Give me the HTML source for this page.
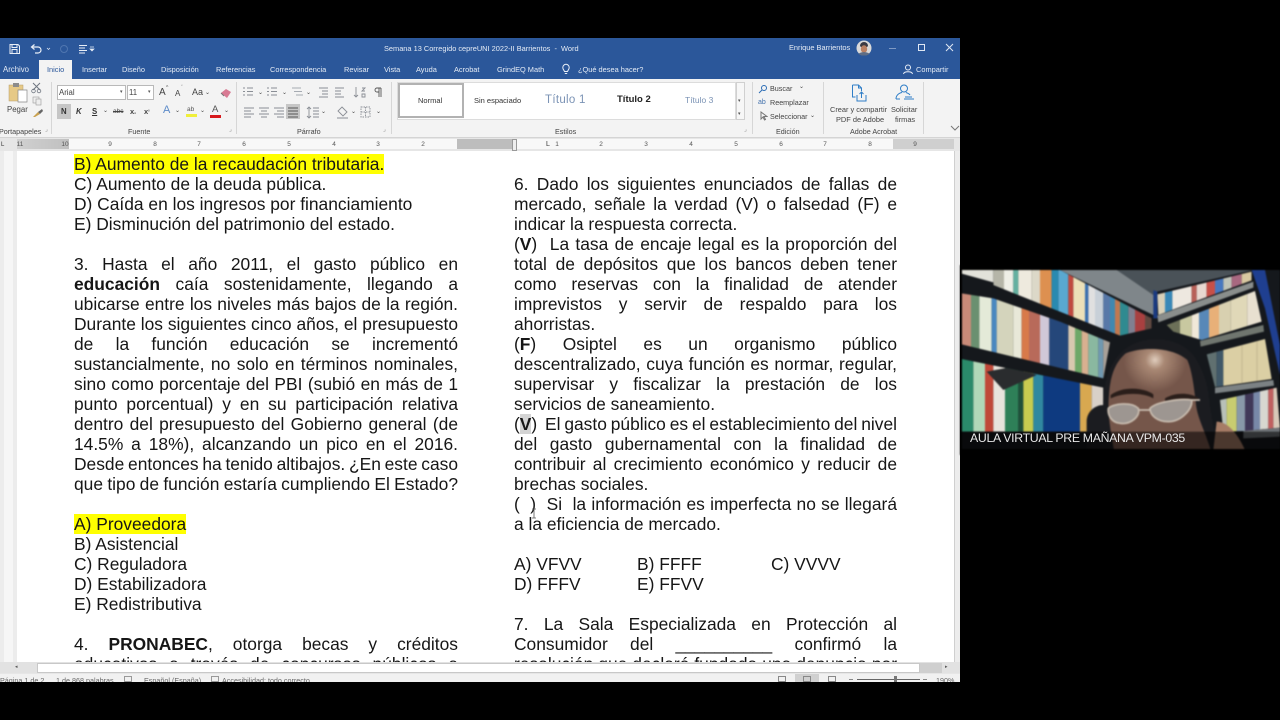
<!DOCTYPE html>
<html lang="es"><head><meta charset="utf-8"><title>Word</title>
<style>
html,body{margin:0;padding:0;background:#000;width:1280px;height:720px;overflow:hidden}
body{position:relative;font-family:"Liberation Sans",sans-serif}
.a{position:absolute;white-space:nowrap}
#word{position:absolute;left:0;top:38px;width:960px;height:644px;background:#e6e6e6;overflow:hidden}
#title{position:absolute;left:0;top:0;width:960px;height:41px;background:#2b579a;filter:blur(.25px)}
#title .a{color:#e4ebf5;font-size:7.400px;line-height:10px}
#ribbon{position:absolute;left:0;top:41px;width:960px;height:58px;background:#f3f3f3;border-bottom:1px solid #d4d4d4;filter:blur(.3px)}
#ribbon .a{font-size:7.200px;line-height:9px;color:#444}
.sep{position:absolute;top:3px;width:1px;height:52px;background:#d6d6d6}
.box{position:absolute;background:#fff;border:1px solid #b9b9b9;box-sizing:border-box}
#ruler{position:absolute;left:0;top:100px;width:960px;height:13px;background:#e6e6e6;filter:blur(.3px)}
#ruler .t{position:absolute;top:2px;font-size:6.500px;line-height:9px;color:#555;width:10px;text-align:center;margin-left:-5px}
#doc{position:absolute;left:17px;top:113px;width:937px;height:511px;background:#fff;overflow:hidden}
#txt{position:absolute;left:0;top:0;width:937px;height:511px;filter:blur(.3px)}
.col{position:absolute;width:384px;font-size:17.400px;line-height:20px;color:#161616}
.l{position:absolute;left:0;width:384px;height:20px;line-height:20px;text-align:justify;text-align-last:justify;overflow:hidden;word-spacing:-3px}
.r .l{width:383px}
.n{text-align:left;text-align-last:left;white-space:pre;word-spacing:0}
.y{background:#ffff00;display:inline-block;line-height:20px;height:20px}
.g{background:#d4d4d4;display:inline-block;line-height:20px;height:20px}
#status .a{font-size:7.200px;line-height:9px;color:#666}
.b rect{height:570px}
</style></head><body>
<div id="word">
 <div id="title">
  <svg class="a" style="left:8px;top:4px" width="90" height="14" viewBox="0 0 90 14" fill="none" stroke="#e8eef7">
   <path d="M2 2.500h8l1.500 1.500v7.500h-9.500z M4 2.500v3h5v-3 M4 11.500v-4h5v4" stroke-width="1"/>
   <path d="M24 5h6a3 3 0 0 1 0 6h-3 M26.500 2.500l-3 2.500 3 2.500" stroke-width="1.200"/>
   <path d="M39 6l1.500 1.500 1.500-1.500" stroke-width=".7"/>
   <circle cx="56" cy="7" r="3.500" stroke="#4f76b0" stroke-width="1"/>
   <path d="M71 3.500h8 M71 6h6 M71 8.500h8 M71 11h6" stroke-width="1"/>
  </svg>
  <svg class="a" style="left:89px;top:8px" width="6" height="6" viewBox="0 0 6 6"><path d="M1 1h4 M1 3h4l-2 2z" stroke="#e8eef7" stroke-width=".7" fill="#e8eef7"/></svg>
  <div class="a" style="left:384px;top:6px">Semana 13 Corregido cepreUNI 2022-II Barrientos &nbsp;-&nbsp; Word</div>
  <div class="a" style="left:789px;top:5px">Enrique Barrientos</div>
  <svg class="a" style="left:856px;top:2px" width="16" height="16" viewBox="0 0 16 16"><circle cx="8" cy="8" r="7.500" fill="#d9d9d9"/><path d="M4 6a4 4 0 0 1 8 0l-1 1H5z" fill="#3a3a44"/><ellipse cx="8" cy="9" rx="3.200" ry="3.800" fill="#b98063"/><path d="M2.500 14c2-2.500 9-2.500 11 0l-3 1.500h-5z" fill="#5e6d85"/></svg>
  <svg class="a" style="left:885px;top:4px" width="72" height="12" viewBox="0 0 72 12" fill="none" stroke="#dfe7f3"><path d="M4 6.500h7" stroke="#7f9ac4"/><rect x="33.500" y="2.500" width="6" height="6"/><path d="M61 2l7 7M68 2l-7 7"/></svg>
  <div class="a" style="left:3px;top:27px;font-size:7.800px">Archivo</div>
  <div class="a" style="left:39px;top:22px;width:33px;height:19px;background:#f3f3f3"></div>
  <div class="a" style="left:47px;top:27px;color:#2b579a">Inicio</div>
  <div class="a" style="left:82px;top:27px">Insertar</div>
  <div class="a" style="left:122px;top:27px">Diseño</div>
  <div class="a" style="left:161px;top:27px">Disposición</div>
  <div class="a" style="left:216px;top:27px">Referencias</div>
  <div class="a" style="left:270px;top:27px">Correspondencia</div>
  <div class="a" style="left:344px;top:27px">Revisar</div>
  <div class="a" style="left:384px;top:27px">Vista</div>
  <div class="a" style="left:416px;top:27px">Ayuda</div>
  <div class="a" style="left:454px;top:27px">Acrobat</div>
  <div class="a" style="left:497px;top:27px">GrindEQ Math</div>
  <svg class="a" style="left:561px;top:25px" width="10" height="12" viewBox="0 0 10 12" fill="none" stroke="#e8eef7"><path d="M3.500 8.500C3 7 1.800 6.500 1.800 4.500a3.200 3.200 0 0 1 6.400 0C8.200 6.500 7 7 6.500 8.500z M3.800 10.500h2.400"/></svg>
  <div class="a" style="left:578px;top:27px">¿Qué desea hacer?</div>
  <svg class="a" style="left:903px;top:26px" width="10" height="11" viewBox="0 0 10 11" fill="none" stroke="#e8eef7"><circle cx="5" cy="3.500" r="2.500"/><path d="M.5 10c.5-3 8.500-3 9 0"/></svg>
  <div class="a" style="left:916px;top:27px">Compartir</div>
 </div>
 <div id="ribbon">
  <svg class="a" style="left:8px;top:3px" width="38" height="36" viewBox="0 0 38 36">
   <rect x="1" y="3" width="14" height="16" fill="#e6c987" stroke="#b69c68" stroke-width=".5"/>
   <rect x="5" y="1" width="6" height="4" fill="#8c8c8c"/>
   <path d="M10 8h9v12h-9z" fill="#fff" stroke="#888" stroke-width=".7"/>
   <path d="M25 8l7-7 M32 8l-7-7" stroke="#6f7680" stroke-width="1" fill="none"/>
   <circle cx="25.500" cy="9" r="1.800" fill="none" stroke="#6f7680" stroke-width=".8"/><circle cx="31" cy="9" r="1.800" fill="none" stroke="#6f7680" stroke-width=".8"/>
   <rect x="25" y="15" width="6" height="6" fill="#eee" stroke="#999" stroke-width=".6"/><rect x="28" y="17" width="5" height="6" fill="#eee" stroke="#999" stroke-width=".6"/>
   <path d="M25 35l5-5 2 2-5 3z" fill="#c9a14f"/><path d="M30 30l4-3 1 2-3 3z" fill="#666"/>
  </svg>
  <div class="a" style="left:7px;top:26px;font-size:7.800px">Pegar</div>
  <div class="a" style="left:-1px;top:48px">Portapapeles</div>
  <div class="a" style="left:45px;top:47px;font-size:6px;color:#888">⌟</div>
  <div class="sep" style="left:51px"></div>
  <div class="box" style="left:57px;top:6px;width:69px;height:15px"></div>
  <div class="a" style="left:59px;top:9px;font-size:7.800px">Arial</div>
  <div class="a" style="left:120px;top:9px;font-size:5px;color:#555">▾</div>
  <div class="box" style="left:127px;top:6px;width:27px;height:15px"></div>
  <div class="a" style="left:129px;top:9px;font-size:7.800px">11</div>
  <div class="a" style="left:148px;top:9px;font-size:5px;color:#555">▾</div>
  <div class="a" style="left:159px;top:8px;font-size:10px;line-height:11px">A</div><div class="a" style="left:166px;top:5px;font-size:5px;color:#555">^</div>
  <div class="a" style="left:175px;top:10px;font-size:8px">A</div><div class="a" style="left:181px;top:5px;font-size:5px;color:#555">ˇ</div>
  <div class="a" style="left:192px;top:9px;font-size:9px">Aa</div><div class="a" style="left:205px;top:10px;font-size:6px">⌄</div>
  <svg class="a" style="left:220px;top:8px" width="12" height="12" viewBox="0 0 12 12"><path d="M1 6l5-4 5 3-4 6z" fill="#d87a93"/><path d="M1 6l3 3" stroke="#777"/></svg>
  <div class="a" style="left:57px;top:25px;width:14px;height:15px;background:#c6c6c6"></div>
  <div class="a" style="left:61px;top:28px;font-size:7.800px;font-weight:bold;color:#333">N</div>
  <div class="a" style="left:76px;top:28px;font-size:7.800px;font-style:italic;font-weight:bold;color:#333">K</div>
  <div class="a" style="left:92px;top:28px;font-size:7.800px;font-weight:bold;text-decoration:underline;color:#333">S</div>
  <div class="a" style="left:103px;top:28px;font-size:6px">⌄</div>
  <div class="a" style="left:113px;top:28px;font-size:6.500px;text-decoration:line-through">abc</div>
  <div class="a" style="left:130px;top:28px;font-size:7.500px;font-weight:bold">x<span style="font-size:4.500px">₂</span></div>
  <div class="a" style="left:144px;top:28px;font-size:7.500px;font-weight:bold">x<span style="font-size:4.500px;vertical-align:top">²</span></div>
  <div class="a" style="left:163px;top:25px;font-size:11px;line-height:13px;color:#5c8bc9">A</div><div class="a" style="left:175px;top:28px;font-size:6px">⌄</div>
  <div class="a" style="left:187px;top:26px;font-size:6.500px;color:#555">ab</div><div class="a" style="left:186px;top:35px;width:11px;height:3px;background:#f0ef3a"></div><div class="a" style="left:200px;top:28px;font-size:6px">⌄</div>
  <div class="a" style="left:212px;top:26px;font-size:9.500px;color:#555">A</div><div class="a" style="left:210px;top:36px;width:11px;height:3px;background:#d7191c"></div><div class="a" style="left:224px;top:28px;font-size:6px">⌄</div>
  <div class="a" style="left:128px;top:48px">Fuente</div>
  <div class="a" style="left:229px;top:47px;font-size:6px;color:#888">⌟</div>
  <div class="sep" style="left:236px"></div>
  <svg class="a" style="left:243px;top:7px" width="145" height="34" viewBox="0 0 145 34" fill="none" stroke="#8a8e95" stroke-width=".9">
   <path d="M0 2h2M4 2h6M0 5.500h2M4 5.500h6M0 9h2M4 9h6"/><path d="M24 2h2M28 2h6M24 5.500h2M28 5.500h6M24 9h2M28 9h6"/><path d="M49 2h9M51 5.500h8M53 9h7" stroke="#a6abb2"/>
   <path d="M76 2h9M79 5h6M79 8h6M76 11h9"/><path d="M92 2h9M92 5h6M92 8h6M92 11h9"/>
   <path d="M113 1v10M111 9l2 2 2-2M119 2h3l-3 3h3M119 8h3v3h-3z"/>
   <path d="M134 2h4M136 2v9M138 2v9M134 2a2 2 0 0 0 0 4h2" stroke="#555"/>
   <path d="M1 22h10M1 25h7M1 28h10M1 31h7"/><path d="M16 22h10M18 25h6M16 28h10M18 31h6"/><path d="M31 22h10M34 25h7M31 28h10M34 31h7"/>
   <rect x="43" y="18" width="14" height="15" fill="#c6c6c6" stroke="none"/><path d="M45 22h10M45 25h10M45 28h10M45 31h10" stroke="#555"/>
   <path d="M66 21v11M64 23l2-2 2 2M64 30l2 2 2-2M70 22h6M70 25h6M70 28h6M70 31h6"/>
   <path d="M99 21l5 5-4 4-5-5z M94 32h11"/><path d="M118 21h9v10h-9zM122.500 21v10M118 26h9" stroke-dasharray="1.500 1"/>
  </svg>
  <div class="a" style="left:258px;top:10px;font-size:6px">⌄</div><div class="a" style="left:282px;top:10px;font-size:6px">⌄</div><div class="a" style="left:306px;top:10px;font-size:6px">⌄</div>
  <div class="a" style="left:321px;top:29px;font-size:6px">⌄</div><div class="a" style="left:351px;top:29px;font-size:6px">⌄</div><div class="a" style="left:376px;top:29px;font-size:6px">⌄</div>
  <div class="a" style="left:297px;top:48px">Párrafo</div>
  <div class="a" style="left:383px;top:47px;font-size:6px;color:#888">⌟</div>
  <div class="sep" style="left:391px"></div>
  <div class="box" style="left:397px;top:3px;width:339px;height:38px;background:#fff;border-color:#dcdcdc"></div>
  <div class="a" style="left:398px;top:4px;width:66px;height:35px;border:2px solid #b2b2b2;box-sizing:border-box;background:#fff"></div>
  <div class="a" style="left:418px;top:17px;font-size:7.500px;color:#333">Normal</div>
  <div class="a" style="left:474px;top:17px;font-size:7.500px;color:#333">Sin espaciado</div>
  <div class="a" style="left:545px;top:15px;font-size:11.500px;line-height:13px;color:#7b93b5;letter-spacing:.3px">Título 1</div>
  <div class="a" style="left:617px;top:15px;font-size:9.500px;line-height:12px;font-weight:bold;color:#222">Título 2</div>
  <div class="a" style="left:685px;top:15px;font-size:8.500px;line-height:12px;color:#7b93b5">Título 3</div>
  <div class="a" style="left:736px;top:3px;width:9px;height:38px;background:#f7f7f7;border:1px solid #d0d0d0;box-sizing:border-box"></div>
  <div class="a" style="left:738px;top:18px;font-size:5px;color:#555">▾</div>
  <div class="a" style="left:738px;top:31px;font-size:5px;color:#555">▾</div>
  <div class="a" style="left:555px;top:48px">Estilos</div>
  <div class="a" style="left:744px;top:47px;font-size:6px;color:#888">⌟</div>
  <div class="sep" style="left:752px"></div>
  <svg class="a" style="left:758px;top:5px" width="10" height="10" viewBox="0 0 10 10" fill="none" stroke="#2b6cb5"><circle cx="6" cy="4" r="2.500"/><path d="M4 6L1 9"/></svg>
  <div class="a" style="left:770px;top:5px">Buscar</div><div class="a" style="left:799px;top:4px;font-size:6px">⌄</div>
  <div class="a" style="left:758px;top:19px;font-size:7px;color:#4573ad">ab</div>
  <div class="a" style="left:770px;top:19px">Reemplazar</div>
  <svg class="a" style="left:760px;top:32px" width="8" height="10" viewBox="0 0 8 10" fill="none" stroke="#777"><path d="M1 1v7l2-2 1.500 3 1-.5L4 5.500h3z"/></svg>
  <div class="a" style="left:770px;top:33px">Seleccionar</div><div class="a" style="left:810px;top:33px;font-size:6px">⌄</div>
  <div class="a" style="left:776px;top:48px">Edición</div>
  <div class="sep" style="left:823px"></div>
  <svg class="a" style="left:851px;top:5px" width="17" height="18" viewBox="0 0 17 18" fill="none" stroke="#2f7ec7" stroke-width="1"><path d="M1.500 1h6l3 3v3M1.500 1v12h3M7.500 1v3h3M6 11v6h9v-6M10.500 14V8M8.500 10l2-2 2 2"/></svg>
  <svg class="a" style="left:893px;top:5px" width="23" height="18" viewBox="0 0 23 18" fill="none" stroke="#2f7ec7" stroke-width="1"><circle cx="11" cy="4.500" r="3.500"/><path d="M3 15c0-5 5-6.500 6-6.500M13 8.500c1.500.5 3 1 4 2.500M3 15h4M11 15h10M12 13h7"/></svg>
  <div class="a" style="left:830px;top:26px;font-size:7.400px">Crear y compartir</div>
  <div class="a" style="left:836px;top:36px;font-size:7.400px">PDF de Adobe</div>
  <div class="a" style="left:891px;top:26px;font-size:7.400px">Solicitar</div>
  <div class="a" style="left:895px;top:36px;font-size:7.400px">firmas</div>
  <div class="a" style="left:850px;top:48px">Adobe Acrobat</div>
  <div class="sep" style="left:923px"></div>
  <svg class="a" style="left:950px;top:46px" width="10" height="6" viewBox="0 0 10 6" fill="none" stroke="#777"><path d="M1 1l4 4 4-4"/></svg>
 </div>
 <div id="ruler">
  <div class="a" style="left:1px;top:4px;width:6px;height:7px;font-size:6px;line-height:7px;color:#333">L</div>
  <div class="a" style="left:17px;top:1px;width:937px;height:10px;background:#f8f8f8"></div>
  <div class="a" style="left:17px;top:1px;width:52px;height:10px;background:linear-gradient(90deg,#d0d0d0,#c0c0c0)"></div>
  <div class="a" style="left:457px;top:1px;width:55px;height:10px;background:#bdbdbd"></div>
  <div class="a" style="left:893px;top:1px;width:61px;height:10px;background:#cfcfcf"></div>
  <div class="a" style="left:512px;top:1px;width:5px;height:12px;border:1px solid #999;box-sizing:border-box;background:#eee"></div>
  <div class="a" style="left:546px;top:3px;font-size:7px;line-height:8px;color:#333">L</div>
  <div class="t" style="left:20px">11</div><div class="t" style="left:65px">10</div><div class="t" style="left:110px">9</div><div class="t" style="left:155px">8</div><div class="t" style="left:199px">7</div><div class="t" style="left:244px">6</div><div class="t" style="left:289px">5</div><div class="t" style="left:334px">4</div><div class="t" style="left:378px">3</div><div class="t" style="left:423px">2</div><div class="t" style="left:557px">1</div><div class="t" style="left:601px">2</div><div class="t" style="left:646px">3</div><div class="t" style="left:691px">4</div><div class="t" style="left:736px">5</div><div class="t" style="left:781px">6</div><div class="t" style="left:825px">7</div><div class="t" style="left:870px">8</div><div class="t" style="left:915px">9</div>
 </div>
 <div class="a" style="left:0;top:113px;width:17px;height:511px;background:#ececec"></div>
 <div class="a" style="left:4px;top:113px;width:9px;height:511px;background:#f6f6f6"></div>
 <div id="doc"><div id="txt">
  <div class="col" style="left:57px;top:0">
   <div class="l n" style="top:3px"><span class="y">B) Aumento de la recaudación tributaria.</span></div>
   <div class="l n" style="top:23px">C) Aumento de la deuda pública.</div>
   <div class="l n" style="top:43px">D) Caída en los ingresos por financiamiento</div>
   <div class="l n" style="top:63px">E) Disminución del patrimonio del estado.</div>
   <div class="l" style="top:103px">3. Hasta el año 2011, el gasto público en</div>
   <div class="l" style="top:123px"><b>educación</b> caía sostenidamente, llegando a</div>
   <div class="l" style="top:143px">ubicarse entre los niveles más bajos de la región.</div>
   <div class="l" style="top:163px">Durante los siguientes cinco años, el presupuesto</div>
   <div class="l" style="top:183px">de la función educación se incrementó</div>
   <div class="l" style="top:203px">sustancialmente, no solo en términos nominales,</div>
   <div class="l" style="top:223px">sino como porcentaje del PBI (subió en más de 1</div>
   <div class="l" style="top:243px">punto porcentual) y en su participación relativa</div>
   <div class="l" style="top:263px">dentro del presupuesto del Gobierno general (de</div>
   <div class="l" style="top:283px">14.5% a 18%), alcanzando un pico en el 2016.</div>
   <div class="l" style="top:303px">Desde entonces ha tenido altibajos. ¿En este caso</div>
   <div class="l" style="top:323px">que tipo de función estaría cumpliendo El Estado?</div>
   <div class="l n" style="top:363px"><span class="y">A) Proveedora</span></div>
   <div class="l n" style="top:383px">B) Asistencial</div>
   <div class="l n" style="top:403px">C) Reguladora</div>
   <div class="l n" style="top:423px">D) Estabilizadora</div>
   <div class="l n" style="top:443px">E) Redistributiva</div>
   <div class="l" style="top:483px">4. <b>PRONABEC</b>, otorga becas y créditos</div>
   <div class="l" style="top:503px">educativos a través de concursos públicos a</div>
  </div>
  <div class="col r" style="left:497px;top:0">
   <div class="l" style="top:23px">6. Dado los siguientes enunciados de fallas de</div>
   <div class="l" style="top:43px">mercado, señale la verdad (V) o falsedad (F) e</div>
   <div class="l n" style="top:63px">indicar la respuesta correcta.</div>
   <div class="l" style="top:83px">(<b>V</b>) &nbsp;La tasa de encaje legal es la proporción del</div>
   <div class="l" style="top:103px">total de depósitos que los bancos deben tener</div>
   <div class="l" style="top:123px">como reservas con la finalidad de atender</div>
   <div class="l" style="top:143px">imprevistos y servir de respaldo para los</div>
   <div class="l n" style="top:163px">ahorristas.</div>
   <div class="l" style="top:183px">(<b>F</b>) Osiptel es un organismo público</div>
   <div class="l" style="top:203px">descentralizado, cuya función es normar, regular,</div>
   <div class="l" style="top:223px">supervisar y fiscalizar la prestación de los</div>
   <div class="l n" style="top:243px">servicios de saneamiento.</div>
   <div class="l" style="top:263px">(<span class="g"><b>V</b></span>) &nbsp;El gasto público es el establecimiento del nivel</div>
   <div class="l" style="top:283px">del gasto gubernamental con la finalidad de</div>
   <div class="l" style="top:303px">contribuir al crecimiento económico y reducir de</div>
   <div class="l n" style="top:323px">brechas sociales.</div>
   <div class="l" style="top:343px">( &nbsp;) &nbsp;Si &nbsp;la información es imperfecta no se llegará</div>
   <div class="l n" style="top:363px">a la eficiencia de mercado.</div>
   <div class="l n" style="top:403px">A) VFVV</div><div class="l n" style="top:403px;left:123px;width:120px">B) FFFF</div><div class="l n" style="top:403px;left:257px;width:120px">C) VVVV</div>
   <div class="l n" style="top:423px">D) FFFV</div><div class="l n" style="top:423px;left:123px;width:120px">E) FFVV</div>
   <div class="l" style="top:463px">7. La Sala Especializada en Protección al</div>
   <div class="l" style="top:483px">Consumidor del __________ confirmó la</div>
   <div class="l" style="top:503px">resolución que declaró fundada una denuncia por</div>
  </div>
  <svg class="a" style="left:514px;top:357px" width="7" height="12" viewBox="0 0 7 12" fill="none" stroke="#555" stroke-width=".8"><path d="M1 1h4M3 1v9M1 10h4"/></svg>
 </div></div>
 <div class="a" style="left:954px;top:113px;width:6px;height:511px;background:#ececec;border-left:1px solid #cfcfcf;box-sizing:border-box"></div>
 <div class="a" style="left:0;top:624px;width:960px;height:11px;background:#e2e2e2"></div>
 <div class="a" style="left:37px;top:625px;width:883px;height:10px;background:#fff;border:1px solid #c8c8c8;box-sizing:border-box"></div>
 <div class="a" style="left:920px;top:625px;width:22px;height:10px;background:#cfcfcf"></div>
 <div class="a" style="left:15px;top:627px;font-size:5px;line-height:5px;color:#555">◂</div>
 <div class="a" style="left:945px;top:627px;font-size:5px;line-height:5px;color:#555">▸</div>
 <div id="status" class="a" style="left:0;top:636px;width:960px;height:8px;background:#f1f1f1;overflow:hidden;filter:blur(.3px)">
  <div class="a" style="left:0;top:2px">Página 1 de 2</div>
  <div class="a" style="left:56px;top:2px">1 de 868 palabras</div>
  <div class="a" style="left:144px;top:2px">Español (España)</div>
  <div class="a" style="left:222px;top:2px">Accesibilidad: todo correcto</div>
  <div class="a" style="left:124px;top:2px;width:8px;height:6px;border:1px solid #999;box-sizing:border-box"></div>
  <div class="a" style="left:211px;top:2px;width:8px;height:6px;border:1px solid #999;box-sizing:border-box"></div>
  <div class="a" style="left:795px;top:0;width:24px;height:8px;background:#d0d0d0"></div>
  <div class="a" style="left:778px;top:2px;width:8px;height:6px;border:1px solid #888;box-sizing:border-box"></div>
  <div class="a" style="left:803px;top:2px;width:8px;height:6px;border:1px solid #888;box-sizing:border-box"></div>
  <div class="a" style="left:828px;top:2px;width:8px;height:6px;border:1px solid #888;box-sizing:border-box"></div>
  <div class="a" style="left:857px;top:5px;width:63px;height:1px;background:#666"></div>
  <div class="a" style="left:894px;top:2px;width:3px;height:6px;background:#777"></div>
  <div class="a" style="left:849px;top:5px;width:4px;height:1px;background:#888"></div>
  <div class="a" style="left:923px;top:5px;width:4px;height:1px;background:#888"></div>
  <div class="a" style="left:936px;top:2px">190%</div>
 </div>
</div>

<svg class="a" style="left:960px;top:265px;filter:blur(.8px)" width="320" height="190" viewBox="0 0 960 570">
 <defs>
  <clipPath id="ca"><polygon points="100,15 300,15 575,160 575,190 480,212 100,60"/></clipPath>
  <clipPath id="cb"><polygon points="5,85 100,100 300,170 450,232 430,340 5,238"/></clipPath>
  <clipPath id="cc"><polygon points="5,282 430,368 430,500 5,500"/></clipPath>
  <clipPath id="cd"><polygon points="592,88 875,20 875,46 595,150"/></clipPath>
  <clipPath id="ce"><polygon points="620,180 885,78 905,170 725,225 640,200"/></clipPath>
  <clipPath id="cf"><polygon points="740,268 915,222 935,342 765,366"/></clipPath>
  <clipPath id="cg"><polygon points="780,405 950,368 960,488 850,498 790,500"/></clipPath>
  <radialGradient id="fh" cx="585" cy="285" r="95" gradientUnits="userSpaceOnUse"><stop offset="0" stop-color="#e0cdbd"/><stop offset=".3" stop-color="#a98874"/><stop offset="1" stop-color="#75564a"/></radialGradient>
 </defs>
 <rect width="960" height="570" fill="#000"/>
 <rect x="5" y="15" width="955" height="540" fill="#15181c"/>
 <polygon points="300,15 600,15 580,150" fill="#7f868a"/>
 <polygon points="470,15 880,15 590,80 580,90" fill="#4a5258"/>
 <polygon points="5,15 100,15 100,52 5,26" fill="#e2e2da"/>
 <g class="b" clip-path="url(#ca)">
  <rect x="100" width="32" fill="#b5b5a8"/><rect x="132" width="28" fill="#eeeee6"/><rect x="160" width="15" fill="#63b0a0"/><rect x="175" width="40" fill="#eeeade"/><rect x="215" width="25" fill="#dcd8c8"/><rect x="240" width="35" fill="#dd9050"/><rect x="275" width="20" fill="#2a8ab0"/><rect x="295" width="30" fill="#5aa8d0"/><rect x="325" width="15" fill="#c04a40"/><rect x="340" width="35" fill="#ece0b8"/><rect x="375" width="10" fill="#3a70b0"/><rect x="385" width="20" fill="#e0e0e0"/><rect x="405" width="25" fill="#c8d0d8"/><rect x="430" width="20" fill="#5878a8"/><rect x="450" width="15" fill="#4088b0"/><rect x="465" width="15" fill="#c07850"/><rect x="480" width="25" fill="#2f8a90"/><rect x="505" width="20" fill="#808090"/><rect x="525" width="30" fill="#a84040"/><rect x="555" width="20" fill="#604840"/>
 </g>
 <g class="b" clip-path="url(#cb)">
  <rect x="5" width="28" fill="#c98a78"/><rect x="33" width="25" fill="#6a9070"/><rect x="58" width="37" fill="#e4ead8"/><rect x="95" width="15" fill="#4a88c0"/><rect x="110" width="50" fill="#d4d4bc"/><rect x="160" width="25" fill="#e8e8d8"/><rect x="185" width="22" fill="#d87a4a"/><rect x="207" width="33" fill="#b86a5a"/><rect x="240" width="28" fill="#d0c8d8"/><rect x="268" width="57" fill="#25477a"/><rect x="325" width="20" fill="#d8c8b0"/><rect x="345" width="20" fill="#6ea868"/><rect x="365" width="20" fill="#d8b090"/><rect x="385" width="30" fill="#8ab8a0"/><rect x="415" width="15" fill="#7098b0"/><rect x="430" width="20" fill="#a8a098"/>
 </g>
 <g class="b" clip-path="url(#cc)">
  <rect x="5" width="35" fill="#2a8a6a"/><rect x="40" width="35" fill="#b0d8b8"/><rect x="75" width="25" fill="#c04838"/><rect x="100" width="35" fill="#e8e4dc"/><rect x="135" width="40" fill="#2e8058"/><rect x="175" width="15" fill="#20503a"/><rect x="190" width="30" fill="#c8cc50"/><rect x="220" width="30" fill="#3088a0"/><rect x="250" width="110" fill="#0e3a80"/><rect x="360" width="35" fill="#d8a850"/><rect x="395" width="35" fill="#d8d0c8"/>
  <polygon points="80,320 160,305 230,330 130,375" fill="#2a2c2e"/>
 </g>
 <g class="b" clip-path="url(#cd)">
  <rect x="590" width="25" fill="#d8d0b8"/><rect x="615" width="22" fill="#3888b8"/><rect x="637" width="58" fill="#eee8e0"/><rect x="695" width="15" fill="#b86058"/><rect x="710" width="30" fill="#e8d8d0"/><rect x="740" width="25" fill="#c85048"/><rect x="765" width="25" fill="#4878c0"/><rect x="790" width="25" fill="#c0c4b8"/><rect x="815" width="30" fill="#a86880"/><rect x="845" width="30" fill="#d8c8a0"/>
 </g>
 <polygon points="592,152 880,50 880,68 595,172" fill="#8a8e8c"/>
 <g class="b" clip-path="url(#ce)">
  <rect x="620" width="40" fill="#6c7058"/><rect x="660" width="35" fill="#c8c8a0"/><rect x="695" width="22" fill="#f0e8d8"/><rect x="717" width="30" fill="#5888b8"/><rect x="747" width="30" fill="#e8b078"/><rect x="777" width="35" fill="#d8d0b0"/><rect x="812" width="50" fill="#e0d8b8"/><rect x="862" width="43" fill="#e8e0d0"/>
 </g>
 <polygon points="720,228 910,180 912,200 722,245" fill="#70766f"/>
 <g class="b" clip-path="url(#cf)">
  <rect x="740" width="30" fill="#607070"/><rect x="770" width="20" fill="#405868"/><rect x="790" width="145" fill="#dbcfa4"/><rect x="845" width="2" fill="#b8ac88"/><rect x="890" width="2" fill="#b8ac88"/>
 </g>
 <polygon points="765,368 940,345 942,362 765,385" fill="#7c8284"/>
 <g class="b" clip-path="url(#cg)">
  <rect x="780" width="20" fill="#b8c0b8"/><rect x="800" width="30" fill="#c8cc70"/><rect x="830" width="25" fill="#8898a8"/><rect x="855" width="25" fill="#403858"/><rect x="880" width="20" fill="#7888a8"/><rect x="900" width="25" fill="#d8d8d0"/><rect x="925" width="15" fill="#c06060"/><rect x="940" width="20" fill="#d8c8b8"/>
 </g>
 <polygon points="850,498 960,488 960,515 850,520" fill="#6e7276"/>
 <polygon points="580,75 592,80 592,160 580,160" fill="#1a3a80"/>
 <polygon points="875,15 915,15 960,240 960,330 915,130" fill="#1f3f90"/>
 <path d="M380 555V470c0-30 25-50 50-50 0-100 40-180 130-195 65-10 130 15 155 70 25 45 30 80 35 130l10 60 20 70z" fill="#1b1c20"/>
 <path d="M462 555c-12-70-20-110-15-165 3-50 15-95 50-125 50-20 140-20 185 20 15 35 20 85 25 125 3 45 25 80 45 145z" fill="url(#fh)"/>
 <path d="M452 390c40-30 105-20 128-2v12c-30-18-90-18-128 0zM615 400c30-18 70-18 100-2v8c-30-8-70-8-100 4z" fill="#2a1e1a"/>
 <path d="M445 430c15-15 70-20 90 0 8 25-25 50-55 45-25-2-38-25-35-45zM570 430c20-20 90-30 125-25 5 25-30 65-70 65-35 0-55-20-55-40z" fill="#a8a6a2" fill-opacity=".8" stroke="#c9bdb0" stroke-width="5"/>
 <path d="M535 435h35M695 405h25" stroke="#c9bdb0" stroke-width="5"/>
 <path d="M770 470c30 0 60 30 85 85H760z" fill="#a67c66"/>
 <rect x="5" y="500" width="955" height="52" fill="#000" fill-opacity=".55"/>
 <rect x="0" y="552" width="960" height="18" fill="#000"/>
 <rect x="0" y="0" width="6" height="570" fill="#000"/>
</svg>
<div class="a" style="left:970px;top:430px;font-size:12.300px;line-height:16px;letter-spacing:-.32px;color:#e8e8e8;z-index:2">AULA VIRTUAL PRE MAÑANA VPM-035</div>
</body></html>
